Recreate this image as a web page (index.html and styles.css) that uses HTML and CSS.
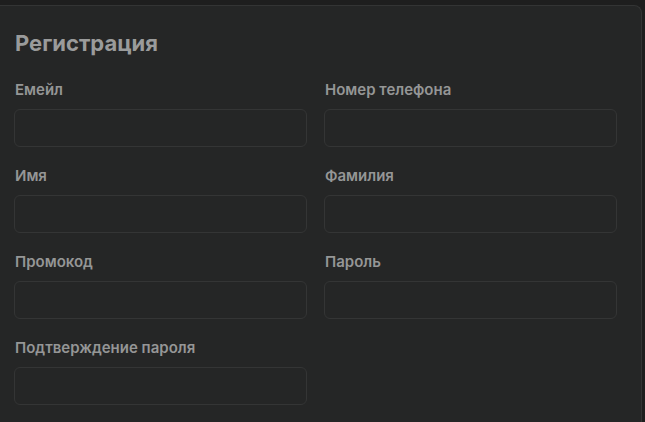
FILE: index.html
```html
<!DOCTYPE html>
<html lang="ru">
<head>
<meta charset="utf-8">
<link rel="stylesheet" href="styles.css">
</head>
<body>
<div class="card">
  <h1 class="title">Регистрация</h1>
  <div class="grid">
    <div class="field"><label class="label">Емейл</label><div class="input"></div></div>
    <div class="field"><label class="label">Номер телефона</label><div class="input"></div></div>
    <div class="field"><label class="label">Имя</label><div class="input"></div></div>
    <div class="field"><label class="label">Фамилия</label><div class="input"></div></div>
    <div class="field"><label class="label">Промокод</label><div class="input"></div></div>
    <div class="field"><label class="label">Пароль</label><div class="input"></div></div>
    <div class="field"><label class="label">Подтверждение пароля</label><div class="input"></div></div>
  </div>
</div>
</body>
</html>
```

FILE: styles.css
```css
html, body {
  margin: 0;
  padding: 0;
  background: #1e1e1e;
  height: 100%;
  overflow: hidden;
}
body {
  font-family: Inter, "Noto Sans", "Liberation Sans", sans-serif;
}
.card {
  box-sizing: border-box;
  margin: 5px 3px 0 0;
  height: calc(100% - 5px);
  background: #252626;
  border: 1px solid #333434;
  border-left: none;
  border-bottom: none;
  border-top-right-radius: 8px;
  padding: 23px 23px 0 14px;
}
.title {
  margin: 0 0 23px 1px;
  font-size: 22px;
  line-height: 28px;
  font-weight: 700;
  color: #9a9b9b;
}
.grid {
  display: grid;
  grid-template-columns: 293px 293px;
  column-gap: 17px;
  row-gap: 19px;
}
.field {
  display: flex;
  flex-direction: column;
  gap: 9px;
}
.label {
  margin-left: 1px;
  font-size: 15px;
  line-height: 20px;
  font-weight: 600;
  color: #959696;
}
.input {
  height: 36px;
  border: 1px solid #343535;
  border-radius: 6px;
  background: #252626;
}
```
